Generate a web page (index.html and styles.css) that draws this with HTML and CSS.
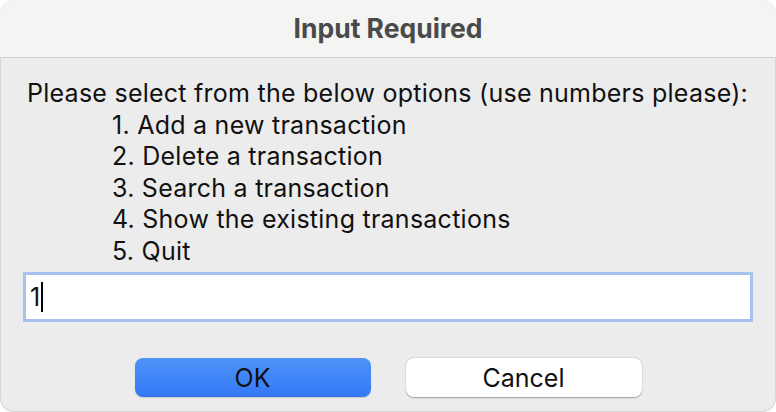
FILE: index.html
```html
<!DOCTYPE html>
<html>
<head>
<meta charset="utf-8">
<link rel="stylesheet" href="styles.css">
</head>
<body>
<div class="window">
  <div class="titlebar">Input Required</div>
  <div class="content">
    <div class="message">
      <div class="prompt">Please select from the below options (use numbers please):</div>
      <div class="opt">1. Add a new transaction</div>
      <div class="opt">2. Delete a transaction</div>
      <div class="opt">3. Search a transaction</div>
      <div class="opt">4. Show the existing transactions</div>
      <div class="opt">5. Quit</div>
    </div>
    <div class="field"><span class="val">1</span><span class="caret"></span></div>
    <div class="buttons">
      <div class="btn ok">OK</div>
      <div class="btn cancel">Cancel</div>
    </div>
  </div>
</div>
</body>
</html>
```
FILE: styles.css
```css
html, body { margin: 0; padding: 0; }
body {
  width: 776px; height: 412px; overflow: hidden;
  background: #ffffff;
  font-family: Inter, "Liberation Sans", sans-serif;
}
.window {
  width: 776px; height: 412px; box-sizing: border-box;
  background: #ececec;
  border-radius: 14px;
  overflow: hidden;
  display: flex; flex-direction: column;
  box-shadow: inset 0 0 0 1px #d6d6d6;
}
.titlebar {
  flex: none;
  background: #f4f4f2;
  border-bottom: 1px solid #d2d2d2;
  display: flex; align-items: center; justify-content: center;
  font-weight: 700; font-size: 26.5px; color: #4a4a4a;
  padding-bottom: 2px; box-sizing: border-box; height: 58px;
}
.content { padding: 20px 23px 0 23px; display: flex; flex-direction: column; }
.message { font-size: 25px; color: #111; line-height: 31.5px; letter-spacing: 0.25px; }
.prompt { padding-left: 4px; }
.opt { padding-left: 89px; }
.field {
  margin-top: 5px;
  height: 50px; box-sizing: border-box;
  background: #fff;
  border: 3px solid #a6c3ef;
  display: flex; align-items: center;
  padding-left: 4px;
  font-size: 25px; color: #111;
}
.caret { width: 2px; height: 30px; background: #000; margin-left: 1px; }
.buttons { margin-top: 36px; display: flex; justify-content: center; gap: 35px; }
.btn {
  width: 236px; height: 39px; box-sizing: border-box;
  border-radius: 8px;
  display: flex; align-items: center; justify-content: center;
  font-size: 25px; color: #111;
}
.ok { background: linear-gradient(#4d93f7, #3478f6); box-shadow: 0 1px 1px rgba(0,0,0,0.15); }
.cancel { background: #fff; box-shadow: 0 0.5px 1.5px rgba(0,0,0,0.35); }
```
